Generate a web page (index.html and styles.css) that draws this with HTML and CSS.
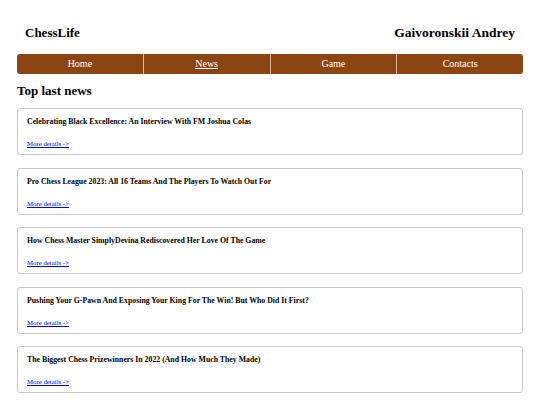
FILE: index.html
```html
<!DOCTYPE html>
<html lang="en">
<head>
    <meta charset="UTF-8">
    <meta name="viewport" content="width=device-width, initial-scale=1.0">
    <title>ChessLife</title>
    <link rel="stylesheet" href="styles.css">
</head>
<body>
    <div class="container">
        <header class="header">
            <div class="logo">ChessLife</div>
            <div class="author">Gaivoronskii Andrey</div>
        </header>

        <nav class="menu">
            <a href="#" class="menu-item">Home</a>
            <a href="#" class="menu-item active">News</a>
            <a href="#" class="menu-item">Game</a>
            <a href="#" class="menu-item">Contacts</a>
        </nav>

        <h2 class="title">Top last news</h2>

        <div class="news-list">
            <div class="news-card">
                <h3>Celebrating Black Excellence: An Interview With FM Joshua Colas</h3>
                <a href="#">More details -&gt;</a>
            </div>
            <div class="news-card">
                <h3>Pro Chess League 2023: All 16 Teams And The Players To Watch Out For</h3>
                <a href="#">More details -&gt;</a>
            </div>
            <div class="news-card">
                <h3>How Chess Master SimplyDevina Rediscovered Her Love Of The Game</h3>
                <a href="#">More details -&gt;</a>
            </div>
            <div class="news-card">
                <h3>Pushing Your G-Pawn And Exposing Your King For The Win! But Who Did It First?</h3>
                <a href="#">More details -&gt;</a>
            </div>
            <div class="news-card">
                <h3>The Biggest Chess Prizewinners In 2022 (And How Much They Made)</h3>
                <a href="#">More details -&gt;</a>
            </div>
        </div>
    </div>
</body>
</html>
```

FILE: styles.css
```css
body {
    font-family: "Liberation Serif", "Times New Roman", serif;
    margin: 0;
    padding: 0;
    background-color: white;
    color: black;
}
.container {
    padding: 0 17px;
}
.header {
    display: flex;
    justify-content: space-between;
    align-items: center;
    padding: 24px 8px 12px 8px;
    font-size: 13px;
    font-weight: bold;
    line-height: 18px;
}
.author {
    font-size: 13.5px;
}
.menu {
    display: flex;
    background-color: #8b4513;
    border-radius: 3px;
    height: 20px;
}
.menu-item {
    flex: 1;
    color: white;
    text-decoration: none;
    font-size: 10px;
    line-height: 20px;
    text-align: center;
    border-right: 1px solid #d9b89a;
}
.menu-item:last-child {
    border-right: none;
}
.menu-item.active {
    text-decoration: underline;
}
.title {
    font-size: 13px;
    margin: 8px 0 8px 0;
    line-height: 18px;
}
.news-card {
    border: 1px solid #c8c8c8;
    border-radius: 3px;
    padding: 8px 9px 7px 9px;
    margin-bottom: 12.5px;
    height: 30px;
}
.news-card h3 {
    font-size: 7.8px;
    margin: 0 0 12px 0;
    line-height: 10px;
}
.news-card a {
    font-size: 6.8px;
    color: #0000ee;
    line-height: 9px;
    display: block;
}
```
